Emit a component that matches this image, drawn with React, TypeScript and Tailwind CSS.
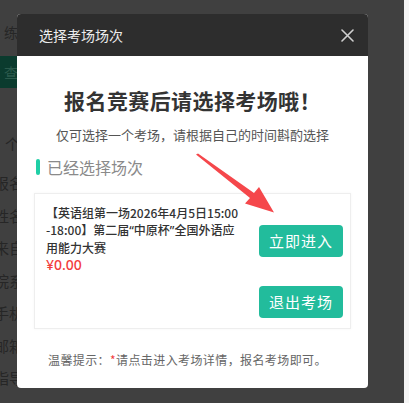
import React from "react";

const cjk = { fontFamily: '"Noto Sans CJK SC", "Noto Sans", sans-serif' };
const latin = { fontFamily: '"Noto Sans", sans-serif' };

export default function App() {
  const labels = ["报名", "姓名", "来自", "院系", "手机", "邮箱", "指导"];
  return (
    <div className="relative w-[409px] h-[403px] overflow-hidden bg-[#404040]" style={cjk}>
      {/* background page (dimmed) */}
      <div className="flex h-full">
        <div className="w-[404px] h-full flex flex-col">
          <div className="h-[56px] pl-[4px] pt-[22px] text-[14px] leading-[20px] text-[#262626]">练习</div>
          <div className="h-[32px] w-[60px] bg-[#0b3b2e] pl-[4px] flex items-center text-[14px] text-[#2c5a4c]">查看</div>
          <div className="pl-[5px] mt-[46px] text-[15px] leading-[20px] text-[#262626]">个人</div>
          <div className="flex flex-col gap-[12.5px] mt-[19px] -ml-[6px] text-[15px] leading-[20px] text-[#262626]">
            {labels.map((l) => (
              <div key={l}>{l}</div>
            ))}
          </div>
        </div>
        <div className="w-[5px] h-full bg-[#f5f5f5]" />
      </div>

      {/* modal */}
      <div className="absolute left-[17px] top-[14px] w-[351px] rounded-[4px] overflow-hidden bg-white">
        <div className="h-[42px] bg-[#2d2d2d] flex items-center justify-between pl-[22px] pr-[14px]">
          <span className="text-[14px] text-[#ededed]">选择考场场次</span>
          <svg width="13" height="13" viewBox="0 0 13 13" className="block">
            <path d="M1 1 L12 12 M12 1 L1 12" stroke="#d0d0d0" strokeWidth="1.6" strokeLinecap="round" />
          </svg>
        </div>
        <div className="flex flex-col">
          <div className="pt-[30px] text-center text-[21px] leading-[28px] font-bold text-[#333] tracking-[0.4px]">
            报名竞赛后请选择考场哦！
          </div>
          <div className="mt-[12px] text-center text-[13px] leading-[18px] text-[#555]">
            仅可选择一个考场，请根据自己的时间斟酌选择
          </div>
          <div className="mt-[13px] ml-[19px] flex items-center gap-[7px]">
            <div className="w-[4px] h-[16px] rounded-[2px] bg-[#1fcfa6]" />
            <span className="text-[16px] leading-[20px] text-[#8a8a8a]">已经选择场次</span>
          </div>
          <div className="mt-[16px] mx-[17px] border border-[#eeeeee] flex justify-between pl-[11px] pr-[7px] pt-[10px] pb-[10px] shadow-[0_0_3px_rgba(0,0,0,0.04)]">
            <div className="flex flex-col whitespace-nowrap">
              <div className="text-[12px] leading-[17px] font-medium text-[#333]">
                <div>【英语组第一场2026年4月5日15:00</div>
                <div>
                  -18:00】第二届<span style={latin}>“</span>中原杯<span style={latin}>”</span>全国外语应
                </div>
                <div>用能力大赛</div>
              </div>
              <div className="text-[14px] leading-[17px] font-medium text-[#f23d3d]" style={latin}>
                ¥0.00
              </div>
            </div>
            <div className="flex flex-col pt-[21px] gap-[29px] shrink-0">
              <button className="w-[84px] h-[32px] rounded-[4px] bg-[#22bc9c] text-white text-[15px] tracking-[1px]">
                立即进入
              </button>
              <button className="w-[84px] h-[32px] rounded-[4px] bg-[#22bc9c] text-white text-[15px] tracking-[1px]">
                退出考场
              </button>
            </div>
          </div>
          <div className="mt-[22px] mb-[20px] pl-[31px] text-[12px] leading-[17px] text-[#666] tracking-[0.4px]">
            温馨提示：<span className="text-[#f23d3d]">*</span>请点击进入考场详情，报名考场即可。
          </div>
        </div>
      </div>

      {/* red arrow */}
      <svg className="absolute left-0 top-0 pointer-events-none" width="409" height="403" viewBox="0 0 409 403">
        <polygon
          points="196,154.5 198,153.5 254,193 259,187 274,212.5 245,203.5 250,198"
          fill="#f5474b"
        />
      </svg>
    </div>
  );
}
